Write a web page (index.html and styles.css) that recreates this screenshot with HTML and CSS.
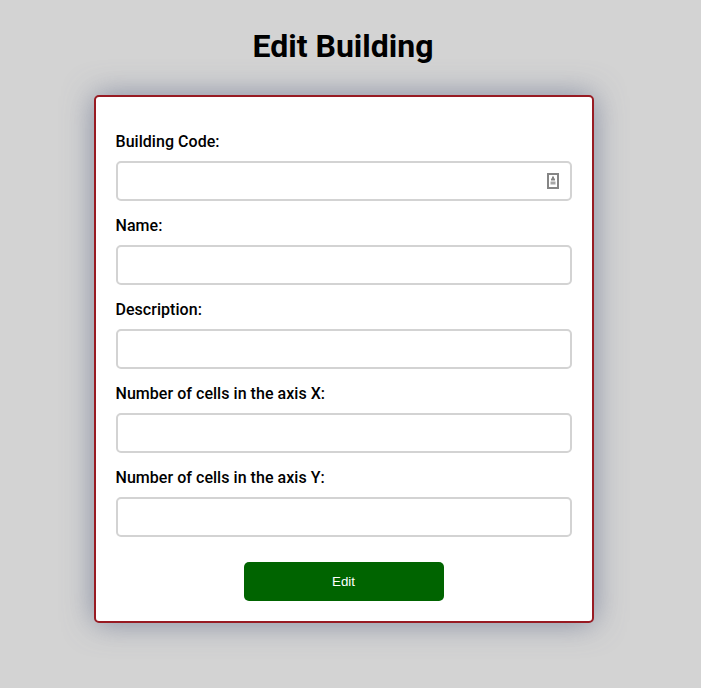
FILE: index.html
```html
<!DOCTYPE html>
<html lang="en">
<head>
<meta charset="utf-8">
<title>Edit Building</title>
<link rel="stylesheet" href="styles.css">
</head>
<body>
<main class="page">
  <h1 class="title">Edit Building</h1>
  <form class="card">
    <label class="label" for="code">Building Code:</label>
    <div class="field">
      <input class="input" id="code" type="text">
      <svg class="autofill" width="12" height="16" viewBox="0 0 12 16">
        <rect x="1" y="1" width="10" height="14" fill="#fff" stroke="#858585" stroke-width="2"/>
        <path d="M5 3.500h2v2h1v2H4v-2h1z" fill="#858585"/>
        <path d="M3.500 8.500h5v3h-5z" fill="#a5a5a5"/>
      </svg>
    </div>
    <label class="label" for="name">Name:</label>
    <input class="input" id="name" type="text">
    <label class="label" for="description">Description:</label>
    <input class="input" id="description" type="text">
    <label class="label" for="cells-x">Number of cells in the axis X:</label>
    <input class="input" id="cells-x" type="text">
    <label class="label" for="cells-y">Number of cells in the axis Y:</label>
    <input class="input" id="cells-y" type="text">
    <button class="submit" type="button">Edit</button>
  </form>
</main>
</body>
</html>
```
FILE: styles.css
```css
* { box-sizing: border-box; }
body {
  margin: 0;
  min-height: 100vh;
  background: #d3d3d3;
  color: #000;
  font-family: Roboto, sans-serif;
}
.page {
  width: 500px;
  min-height: 688px;
  margin-left: 94px;
  padding-top: 27px;
}
.title {
  margin: 0 1px 30px -1px;
  font-size: 32px;
  line-height: 38px;
  font-weight: 700;
  text-align: center;
}
.card {
  display: flex;
  flex-direction: column;
  height: 528px;
  padding: 35px 20px 20px;
  background: #fff;
  border: 2px solid #981b23;
  border-radius: 5px;
  box-shadow: 0 0 30px rgba(100, 110, 140, 0.7);
}
.label {
  height: 20px;
  margin: 0 0 9px -0.5px;
  font-size: 16px;
  line-height: 20px;
  font-weight: 500;
  letter-spacing: 0.04px;
}
.field { position: relative; height: 40px; margin-bottom: 15px; }
.input {
  display: block;
  width: 100%;
  height: 40px;
  margin: 0 0 15px;
  padding: 10px;
  background: #fff;
  border: 2px solid #d3d3d3;
  border-radius: 5px;
}
.autofill { position: absolute; right: 13px; top: 12px; }
.submit {
  align-self: center;
  width: 200px;
  height: 39px;
  margin-top: 10px;
  padding: 0 1px 0 0;
  border: 0;
  border-radius: 5px;
  background: #006400;
  color: #fff;
  font: 13.333px/39px "Liberation Sans", Arial, sans-serif;
}
```
